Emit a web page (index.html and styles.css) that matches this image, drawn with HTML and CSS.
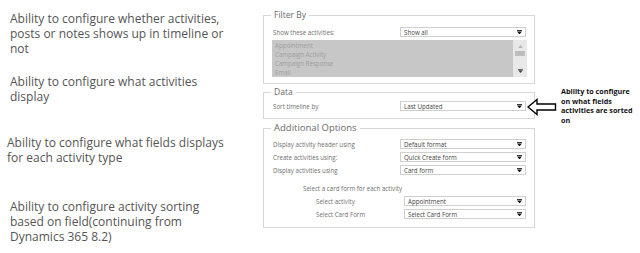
FILE: index.html
```html
<!DOCTYPE html>
<html>
<head>
<meta charset="utf-8">
<link rel="stylesheet" href="styles.css">
</head>
<body>
<div class="page">
  <div class="notes">
    <p class="n1">Ability to configure whether activities, posts or notes shows up in timeline or not</p>
    <p class="n2">Ability to configure what activities display</p>
    <p class="n3">Ability to configure what fields displays for each activity type</p>
    <p class="n4">Ability to configure activity sorting based on field(continuing from Dynamics 365 8.2)</p>
  </div>

  <div class="config">
    <fieldset class="group filter">
      <legend>Filter By</legend>
      <div class="row">
        <span class="label">Show these activities:</span>
        <div class="select"><span>Show all</span><svg class="caret" viewBox="0 0 6 5"><rect x="0" y="0" width="6" height="1"/><polygon points="0,1.5 6,1.5 3,5"/></svg></div>
      </div>
      <div class="listbox">
        <ul class="items">
          <li>Appointment</li>
          <li>Campaign Activity</li>
          <li>Campaign Response</li>
          <li>Email</li>
        </ul>
        <div class="scroll">
          <svg class="sc-up" viewBox="0 0 6 4"><polygon points="0,4 6,4 3,0"/></svg>
          <div class="thumb"></div>
          <svg class="sc-down" viewBox="0 0 6 5"><rect x="0" y="0" width="6" height="1"/><polygon points="0,1.5 6,1.5 3,5"/></svg>
        </div>
      </div>
    </fieldset>

    <fieldset class="group data">
      <legend>Data</legend>
      <div class="row">
        <span class="label">Sort timeline by</span>
        <div class="select"><span>Last Updated</span><svg class="caret" viewBox="0 0 6 5"><rect x="0" y="0" width="6" height="1"/><polygon points="0,1.5 6,1.5 3,5"/></svg></div>
      </div>
    </fieldset>

    <fieldset class="group options">
      <legend>Additional Options</legend>
      <div class="rows">
        <div class="row">
          <span class="label">Display activity header using</span>
          <div class="select"><span>Default format</span><svg class="caret" viewBox="0 0 6 5"><rect x="0" y="0" width="6" height="1"/><polygon points="0,1.5 6,1.5 3,5"/></svg></div>
        </div>
        <div class="row">
          <span class="label">Create activities using:</span>
          <div class="select"><span>Quick Create form</span><svg class="caret" viewBox="0 0 6 5"><rect x="0" y="0" width="6" height="1"/><polygon points="0,1.5 6,1.5 3,5"/></svg></div>
        </div>
        <div class="row">
          <span class="label">Display activities using</span>
          <div class="select"><span>Card form</span><svg class="caret" viewBox="0 0 6 5"><rect x="0" y="0" width="6" height="1"/><polygon points="0,1.5 6,1.5 3,5"/></svg></div>
        </div>
      </div>
      <div class="cardforms">
        <div class="sub-title">Select a card form for each activity</div>
        <div class="rows">
          <div class="row sub">
            <span class="label">Select activity</span>
            <div class="select"><span>Appointment</span><svg class="caret" viewBox="0 0 6 5"><rect x="0" y="0" width="6" height="1"/><polygon points="0,1.5 6,1.5 3,5"/></svg></div>
          </div>
          <div class="row sub">
            <span class="label">Select Card Form</span>
            <div class="select"><span>Select Card Form</span><svg class="caret" viewBox="0 0 6 5"><rect x="0" y="0" width="6" height="1"/><polygon points="0,1.5 6,1.5 3,5"/></svg></div>
          </div>
        </div>
      </div>
    </fieldset>
  </div>

  <div class="callout">
    <svg class="arrow" viewBox="0 0 30 18">
      <polygon points="1,9 10,1.5 10,6 28.5,6 28.5,12 10,12 10,16.5" fill="#fff" stroke="#000" stroke-width="1.4" stroke-linejoin="miter"/>
    </svg>
    <p class="callout-text">Ability to configure on what fields activities are sorted on</p>
  </div>
</div>
</body>
</html>
```

FILE: styles.css
```css
* { box-sizing: border-box; }

html, body {
  margin: 0;
  padding: 0;
  background: #ffffff;
}

body {
  width: 640px;
  height: 253px;
  overflow: hidden;
  font-family: "Open Sans", "DejaVu Sans", sans-serif;
}

.page {
  display: flex;
  align-items: flex-start;
}

/* ---------- left notes ---------- */
.notes {
  width: 263px;
  padding-left: 10px;
  display: flex;
  flex-direction: column;
}

.notes p {
  margin: 0;
  font-size: 12px;
  line-height: 15px;
  color: #555555;
}

.notes .n1 { margin-top: 11px; width: 230px; }
.notes .n2 { margin-top: 18px; width: 205px; }
.notes .n3 { margin-top: 31px; margin-left: -3px; width: 232px; }
.notes .n4 { margin-top: 34px; width: 210px; }

/* ---------- config panel ---------- */
.config {
  width: 272px;
  padding-top: 10px;
  display: flex;
  flex-direction: column;
  gap: 3px;
}

.group {
  margin: 0;
  border: 1px solid #d6d6d6;
  padding: 0 8px 0 9px;
  min-width: 0;
}

.group legend {
  padding: 0 3px;
  margin-left: -2px;
  font-size: 8.5px;
  line-height: 10px;
  color: #6a6a6a;
}

.group.options legend { font-size: 9.5px; }

.filter { padding-top: 7px; padding-bottom: 6px; }
.data { padding-top: 4px; padding-bottom: 7px; }
.options { margin-top: 1px; padding-top: 6px; padding-bottom: 8px; }

.row {
  display: flex;
  align-items: center;
  height: 10px;
}

.rows {
  display: flex;
  flex-direction: column;
  gap: 3px;
}

.label {
  width: 127px;
  flex: none;
  font-size: 6.2px;
  color: #6f6f6f;
  white-space: nowrap;
}

.select {
  flex: 1;
  height: 10px;
  border: 1px solid #cfcfcf;
  background: #fff;
  display: flex;
  align-items: center;
  justify-content: space-between;
  padding: 0 3px 0 3px;
  font-size: 6.2px;
  color: #444;
  white-space: nowrap;
}

.caret {
  width: 5px;
  height: 4.5px;
  fill: #111;
}

/* listbox */
.listbox {
  margin-top: 3px;
  margin-left: -1px;
  margin-right: -1px;
  height: 37px;
  display: flex;
  background: #c7c7c7;
}

.items {
  list-style: none;
  margin: 0;
  padding: 1px 0 0 3px;
  flex: 1;
}

.items li {
  font-size: 6.2px;
  line-height: 9px;
  color: #9e9e9e;
}

.scroll {
  width: 14px;
  background: #e8e8e8;
  display: flex;
  flex-direction: column;
  align-items: center;
  padding: 5px 0 4px;
}

.sc-up {
  width: 5px;
  height: 3px;
  fill: #b5b5b5;
}

.thumb {
  width: 10px;
  height: 5px;
  background: #bdbdbd;
  margin-top: 3px;
}

.sc-down {
  width: 5px;
  height: 4px;
  fill: #444;
  margin-top: auto;
}

/* card forms */
.cardforms {
  margin-top: 9px;
}

.sub-title {
  padding-left: 30px;
  font-size: 6.2px;
  line-height: 10px;
  color: #6f6f6f;
  margin-bottom: 2px;
}

.row.sub .label {
  width: 131px;
  padding-left: 43px;
}

/* ---------- callout ---------- */
.callout {
  margin-left: -8px;
  margin-top: 87px;
  display: flex;
  align-items: flex-start;
  gap: 4px;
}

.arrow {
  width: 30px;
  height: 18px;
  margin-top: 11px;
  flex: none;
}

.callout-text {
  margin: 0;
  width: 76px;
  font-size: 7.2px;
  line-height: 9.6px;
  font-weight: bold;
  color: #111;
}
```
